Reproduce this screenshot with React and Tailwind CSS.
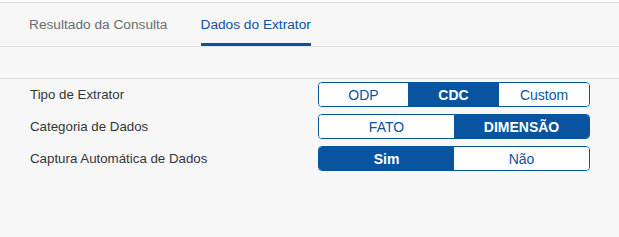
import React from "react";

const Seg = ({ options, selected, widths }) => (
  <div className="flex h-[25px] w-[272px] rounded-[4px] border border-[#0854a0] overflow-hidden">
    {options.map((o, i) => {
      const sel = i === selected;
      return (
        <div
          key={o}
          className={
            "flex items-center justify-center text-[14px] leading-none " +
            (sel ? "bg-[#0854a0] text-white font-bold" : "bg-white text-[#0854a0]")
          }
          style={{ width: widths[i] }}
        >
          {o}
        </div>
      );
    })}
  </div>
);

export default function App() {
  const rows = [
    { label: "Tipo de Extrator", options: ["ODP", "CDC", "Custom"], selected: 1, widths: [89, 91, 90] },
    { label: "Categoria de Dados", options: ["FATO", "DIMENSÃO"], selected: 1, widths: [135, 135] },
    { label: "Captura Automática de Dados", options: ["Sim", "Não"], selected: 0, widths: [135, 135] },
  ];
  return (
    <div
      className="w-[619px] h-[237px] bg-[#f7f7f7] overflow-hidden"
      style={{ fontFamily: '"Liberation Sans", Arial, sans-serif' }}
    >
      <div className="h-[2px] bg-white" />
      <div className="h-[1px] bg-[#dedede]" />
      <div className="flex h-[44px] items-stretch border-b border-[#e3e3e3] pl-[29px] gap-[33px]">
        <div className="flex items-center pt-[2px] text-[13.7px] text-[#6a6d70]">
          Resultado da Consulta
        </div>
        <div className="relative flex items-center pt-[2px] text-[13.7px] text-[#0854a0]">
          Dados do Extrator
          <div className="absolute left-0 right-0 bottom-0 h-[3px] bg-[#0854a0]" />
        </div>
      </div>
      <div className="h-[31px]" />
      <div className="border-t border-[#dcdcdc] pt-[3px]">
        <div className="flex flex-col gap-[7px]">
          {rows.map((r) => (
            <div key={r.label} className="flex items-center">
              <div className="w-[318px] pl-[30px] text-[13.3px] text-[#32363a]">{r.label}</div>
              <Seg options={r.options} selected={r.selected} widths={r.widths} />
            </div>
          ))}
        </div>
      </div>
    </div>
  );
}
